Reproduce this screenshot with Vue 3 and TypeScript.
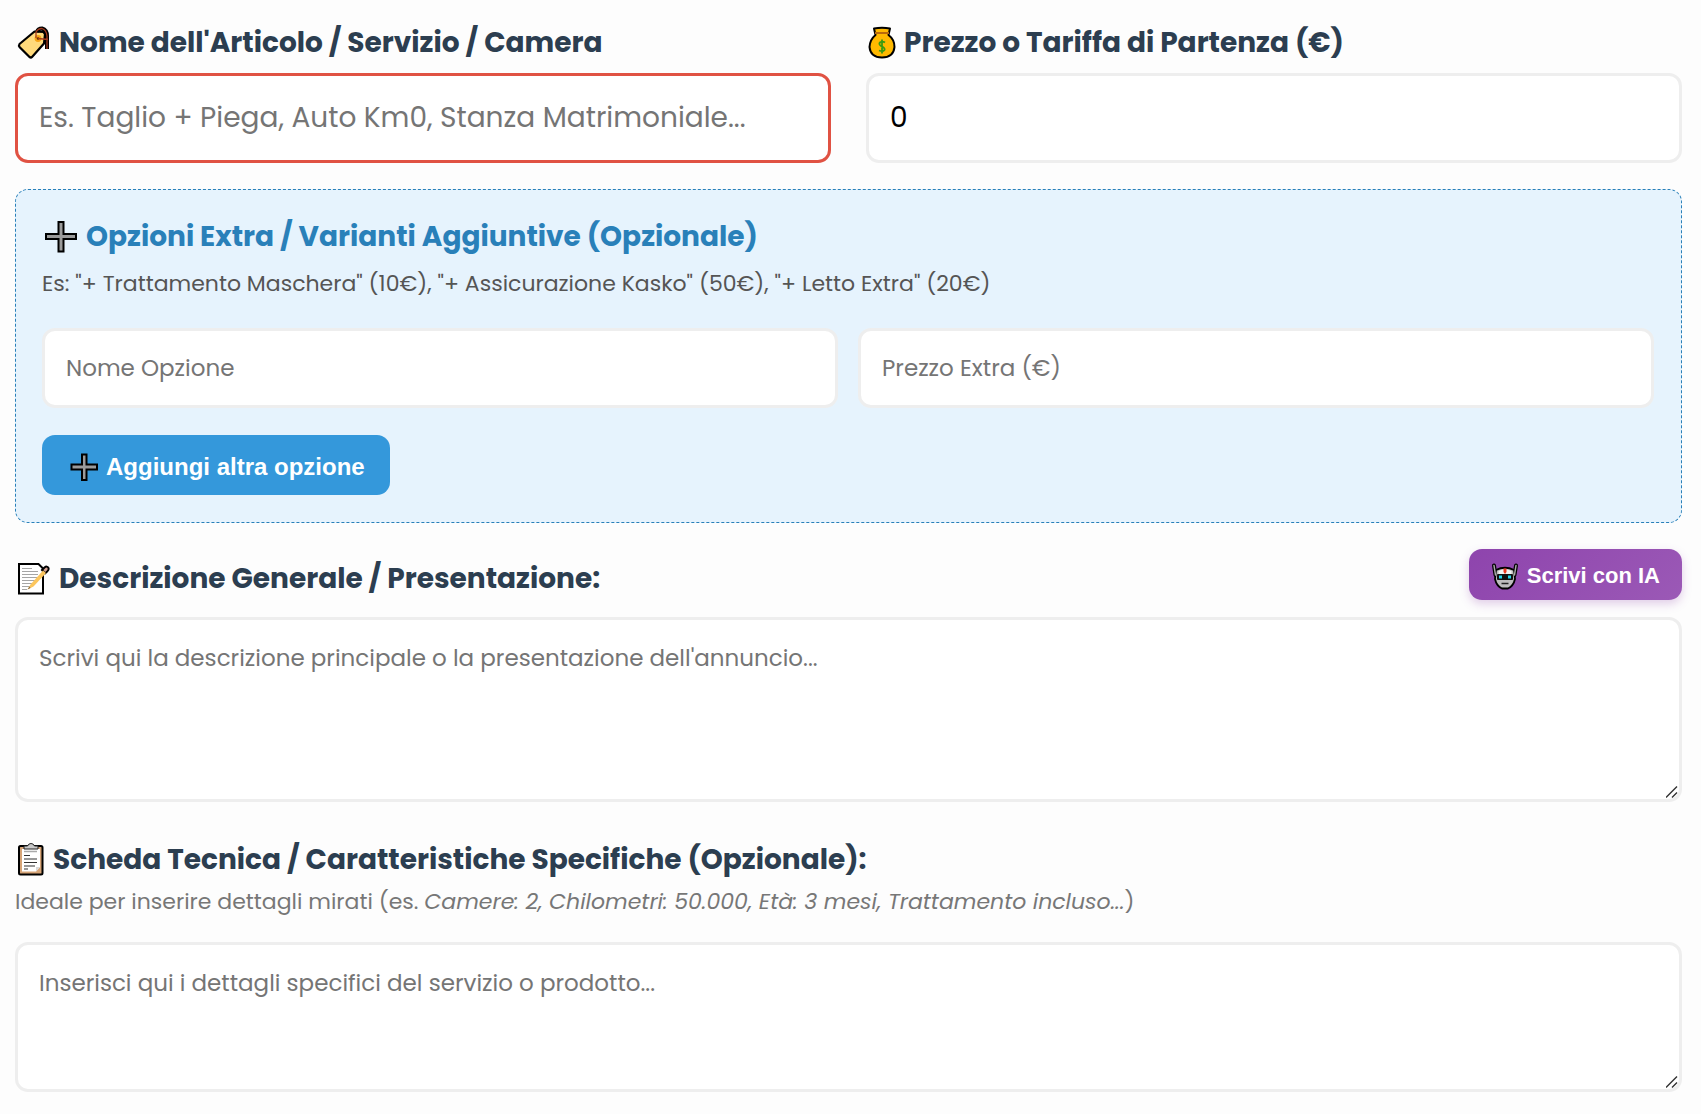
<script setup lang="ts">
import { ref } from 'vue'

interface ExtraOption {
  id: number
  name: string
  price: string
}

const itemName = ref('')
const startPrice = ref('0')
const description = ref('')
const details = ref('')
const options = ref<ExtraOption[]>([{ id: 1, name: '', price: '' }])

function addOption(): void {
  options.value.push({ id: options.value.length + 1, name: '', price: '' })
}
</script>

<template>
  <form class="form" @submit.prevent>
    <div class="row">
      <div class="field">
        <label class="title" for="item-name">
          <svg class="icon" viewBox="0 0 36 36" aria-hidden="true">
            <path d="M19.500 7.500 28.500 8 30 10 29 19.500 17 33Q16 34 14.500 33L4.500 23Q3.500 21.500 4.500 20Z" fill="#ffda7b" stroke="#000" stroke-width="2.200" stroke-linejoin="round" />
            <circle cx="23" cy="14.500" r="3.400" fill="#f7a416" />
            <circle cx="23" cy="14.500" r="1.300" fill="#6b3500" />
            <path d="M22 8Q23 4.500 27 4.500Q32 6 32 12V25" fill="none" stroke="#000" stroke-width="4" />
            <path d="M21 14V8Q23 4.500 27 4.500Q31.500 6 32 12V25M23 14.500 33 15.500" fill="none" stroke="#a53b1d" stroke-width="1.300" />
          </svg>
          <span>Nome dell'Articolo / Servizio / Camera</span>
        </label>
        <input id="item-name" v-model="itemName" class="control large invalid" type="text" placeholder="Es. Taglio + Piega, Auto Km0, Stanza Matrimoniale..." />
      </div>
      <div class="field">
        <label class="title" for="start-price">
          <svg class="icon narrow" viewBox="0 0 30 36" aria-hidden="true">
            <path d="M8 4.500Q16 3 24 4.500L22.500 11Q28.500 15.500 28.500 23Q27.500 33.500 16 33.500Q4.500 33.500 3.500 23Q4 15.500 9.500 11Z" fill="#ffb900" stroke="#000" stroke-width="2" stroke-linejoin="round" />
            <path d="M9 9H23" stroke="#b96a0b" stroke-width="2" />
            <path d="M19 18.500Q17 17 14.500 18Q12 20 15 22Q19.500 24 18.500 26Q17 28 13 26.500M16 15.500V29.500" fill="none" stroke="#3a9b12" stroke-width="1.800" />
          </svg>
          <span>Prezzo o Tariffa di Partenza (€)</span>
        </label>
        <input id="start-price" v-model="startPrice" class="control large" type="text" inputmode="decimal" />
      </div>
    </div>

    <section class="extras">
      <h2 class="title blue">
        <svg class="icon" viewBox="0 0 36 36" aria-hidden="true">
          <path d="M16.500 4H21.500V16H34V21H21.500V33.500H16.500V21H4V16H16.500Z" fill="#9b9b9b" stroke="#000" stroke-width="2" />
        </svg>
        <span>Opzioni Extra / Varianti Aggiuntive (Opzionale)</span>
      </h2>
      <p class="hint">Es: "+ Trattamento Maschera" (10€), "+ Assicurazione Kasko" (50€), "+ Letto Extra" (20€)</p>
      <div v-for="option in options" :key="option.id" class="option">
        <input v-model="option.name" class="control" type="text" placeholder="Nome Opzione" aria-label="Nome Opzione" />
        <input v-model="option.price" class="control" type="text" placeholder="Prezzo Extra (€)" aria-label="Prezzo Extra (€)" />
      </div>
      <button class="button add" type="button" @click="addOption">
        <svg class="glyph" viewBox="0 0 28 28" aria-hidden="true">
          <path d="M12 1.500H16.500V11.500H27V16.500H16.500V27H12V16.500H1.500V11.500H12Z" fill="#9b9b9b" stroke="#000" stroke-width="2" />
        </svg>
        <span>Aggiungi altra opzione</span>
      </button>
    </section>

    <div class="heading-row">
      <label class="title" for="description">
        <svg class="icon" viewBox="0 0 36 36" aria-hidden="true">
          <path d="M4 4H23.500L28 8.500V33.500H4Z" fill="#fff" stroke="#000" stroke-width="2" />
          <path d="M7 8.500H17M7 11.500H23M7 14.500H23M7 17.500H22M7 20.500H20M7 23.500H18M7 26.500H15M7 29.500H12" stroke="#a5a5a5" stroke-width="1" />
          <path d="M27 10 29.500 7.500Q32 5.500 33.500 8Q34.500 10 30 13.500Z" fill="#d4a193" stroke="#000" stroke-width="2" />
          <path d="M12.500 29.500 15.500 24.500 28 10.500 31 13 18.500 26.500Z" fill="#fcc65d" />
          <path d="M12.500 29.500 14.500 26.500 15.500 28Z" fill="#8b6b42" />
        </svg>
        <span>Descrizione Generale / Presentazione:</span>
      </label>
      <button class="button ai" type="button">
        <svg class="glyph" viewBox="0 0 28 28" aria-hidden="true">
          <path d="M4.500 13 3 3.500M23.500 13 25 3.500" stroke="#000" stroke-width="4" stroke-linecap="round" />
          <path d="M5 8Q14 3.500 23 8L24 17Q22.500 24 17 26.500H11Q5.500 24 4 17Z" fill="#bdbdbd" stroke="#000" stroke-width="1.800" />
          <path d="M4.500 13 3 3.500M23.500 13 25 3.500" stroke="#aaa" stroke-width="1.500" stroke-linecap="round" />
          <path d="M7.500 9Q14 5.500 20.500 9V12H7.500Z" fill="#f3f3f3" />
          <path d="M12.500 6.500H15.500V10L14 12 12.500 10Z" fill="#f03a20" />
          <rect x="6" y="12" width="16" height="6" rx="1" fill="#111" />
          <path d="M8 13.500H11V16.500H8ZM17 13.500H20V16.500H17Z" fill="#24d6ed" />
          <path d="M10.500 21.500H17.500" stroke="#222" stroke-width="1.500" />
        </svg>
        <span>Scrivi con IA</span>
      </button>
    </div>
    <div class="area">
      <textarea id="description" v-model="description" class="control tall" placeholder="Scrivi qui la descrizione principale o la presentazione dell'annuncio..."></textarea>
      <svg class="grip" viewBox="0 0 12 12" aria-hidden="true"><path d="M0 11.500 11 .5M6 11.500 11 6.500" /></svg>
    </div>

    <label class="title sheet" for="details">
      <svg class="icon medium" viewBox="0 0 30 36" aria-hidden="true">
        <rect x="4" y="5" width="23.500" height="28.500" rx="1.500" fill="#d6a477" stroke="#000" stroke-width="2" />
        <path d="M7 8H25V26L21 30.500H7Z" fill="#fff" />
        <path d="M25 26H21V30.500Z" fill="#d9d9d9" />
        <path d="M9 8V5H12.500Q13.500 2.500 16 2.500T19.500 5H23V8Z" fill="#c9c9c9" stroke="#222" stroke-width="1" />
        <path d="M9 10.500H22" stroke="#aaa" stroke-width="1.500" />
        <path d="M9 14.500H15M9 18H22M9 21.500H22M9 25H20M9 28H13" stroke="#333" stroke-width="1.200" />
      </svg>
      <span>Scheda Tecnica / Caratteristiche Specifiche (Opzionale):</span>
    </label>
    <p class="hint light">Ideale per inserire dettagli mirati (es. <em>Camere: 2, Chilometri: 50.000, Età: 3 mesi, Trattamento incluso...</em>)</p>
    <div class="area">
      <textarea id="details" v-model="details" class="control short" placeholder="Inserisci qui i dettagli specifici del servizio o prodotto..."></textarea>
      <svg class="grip" viewBox="0 0 12 12" aria-hidden="true"><path d="M0 11.500 11 .5M6 11.500 11 6.500" /></svg>
    </div>
  </form>
</template>

<style>
body {
  margin: 0;
  background: #fdfdfd;
}
</style>

<style scoped>
.form {
  padding: 22px 19px 22px 15px;
  font-family: Poppins, Inter, sans-serif;
  color: #2c3e50;
}
.form * {
  box-sizing: border-box;
}
.row {
  display: grid;
  grid-template-columns: 1fr 1fr;
  gap: 35px;
}
.title {
  display: flex;
  align-items: center;
  gap: 8px;
  height: 42px;
  margin: 0;
  font-size: 28px;
  line-height: 42px;
  font-weight: 700;
  white-space: nowrap;
}
.row .title {
  margin-bottom: 9px;
}
.blue {
  color: #2980b9;
}
.icon {
  flex: none;
  width: 36px;
  height: 36px;
  margin-bottom: 2px;
}
.icon.narrow,
.icon.medium {
  width: 30px;
}
.control {
  display: block;
  width: 100%;
  min-width: 0;
  height: 80px;
  margin: 0;
  padding: 0 21px;
  border: 3px solid #eee;
  border-radius: 13px;
  outline: none;
  background: #fff;
  color: #000;
  font-family: inherit;
  font-size: 23px;
  line-height: 36px;
}
.control::placeholder {
  color: #757575;
  opacity: 1;
}
.control.large {
  height: 90px;
  font-size: 28px;
}
.control.invalid {
  border-color: #e05243;
}
.extras {
  margin-top: 26px;
  padding: 26px 27px 27px 26px;
  border: 1px dashed #2980b9;
  border-radius: 13px;
  background: #e6f3fd;
}
.hint {
  margin: 0;
  color: #555;
  font-size: 22px;
  line-height: 36px;
  white-space: nowrap;
}
.hint.light {
  color: #777;
}
.extras .hint {
  margin-top: 8px;
  margin-bottom: 26px;
}
.option {
  display: grid;
  grid-template-columns: 1fr 1fr;
  gap: 20px;
  margin-bottom: 27px;
}
.button {
  display: flex;
  align-items: center;
  gap: 8px;
  margin: 0;
  border: 0;
  border-radius: 13px;
  color: #fff;
  font-family: "Liberation Sans", Arial, sans-serif;
  font-weight: 700;
  white-space: nowrap;
  cursor: pointer;
}
.glyph {
  flex: none;
  width: 28px;
  height: 28px;
}
.add {
  height: 60px;
  padding: 4px 25px 0 28px;
  background: #3498db;
  font-size: 24px;
}
.ai {
  height: 51px;
  padding: 2px 22px 0;
  background: linear-gradient(135deg, #8e44ad, #9b59b6);
  box-shadow: 0 4px 10px rgba(142, 68, 173, 0.25);
  font-size: 22px;
}
.heading-row {
  display: flex;
  justify-content: space-between;
  align-items: flex-end;
  margin-top: 26px;
  margin-bottom: 17px;
}
.area {
  position: relative;
}
textarea.control {
  padding: 20px 21px;
  resize: vertical;
}
textarea.control::-webkit-resizer {
  display: none;
}
textarea.tall {
  height: 185px;
}
textarea.short {
  height: 150px;
}
.grip {
  position: absolute;
  right: 4px;
  bottom: 4px;
  width: 12px;
  height: 12px;
  fill: none;
  stroke: #333;
  stroke-width: 1.400;
  pointer-events: none;
}
.sheet {
  margin-top: 37px;
}
.sheet + .hint {
  margin-top: 3px;
  margin-bottom: 22px;
}
</style>
